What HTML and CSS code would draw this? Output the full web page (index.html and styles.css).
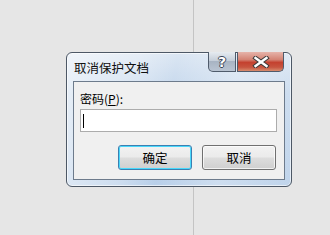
FILE: index.html
```html
<!DOCTYPE html>
<html lang="zh-CN">
<head>
<meta charset="utf-8">
<link rel="stylesheet" href="styles.css">
</head>
<body>
<div class="dialog">
  <div class="titlebar">
    <span class="title">取消保护文档</span>
    <div class="caption-btns">
      <div class="cbtn help"><span class="glyph">?</span></div>
      <div class="cbtn close">
        <svg width="18" height="12" viewBox="0 0 18 12">
          <path d="M3.5 2 L14.5 10 M14.5 2 L3.5 10" stroke="#3a3a3a" stroke-width="4.4" stroke-linecap="square" fill="none"/>
          <path d="M3.5 2 L14.5 10 M14.5 2 L3.5 10" stroke="#ffffff" stroke-width="2.4" stroke-linecap="square" fill="none"/>
        </svg>
      </div>
    </div>
  </div>
  <div class="client">
    <div class="label">密码(<u>P</u>):</div>
    <div class="input"><span class="caret"></span></div>
    <div class="actions">
      <div class="btn default">确定</div>
      <div class="btn">取消</div>
    </div>
  </div>
</div>
</body>
</html>
```
FILE: styles.css
```css
html, body {
  margin: 0;
  padding: 0;
}
body {
  width: 330px;
  height: 235px;
  box-sizing: border-box;
  padding: 52px 0 0 66px;
  background:
    linear-gradient(to right, transparent 193px, #c4c4c4 193px, #c4c4c4 194px, transparent 194px),
    #e6e6e6;
  font-family: "Noto Sans CJK SC", "Microsoft YaHei", sans-serif;
  font-size: 12px;
  color: #000;
  overflow: hidden;
}
.dialog {
  width: 226px;
  height: 135px;
  box-sizing: border-box;
  border: 1px solid #4d5866;
  border-radius: 6px;
  background:
    linear-gradient(100deg, rgba(255,255,255,0.6) 0%, rgba(255,255,255,0.3) 30%, rgba(255,255,255,0) 45%, rgba(255,255,255,0.3) 70%, rgba(255,255,255,0.1) 100%),
    linear-gradient(#dbe6f3 0px, #c4d7ec 40px, #b8cfe9 100%);
  box-shadow: inset 0 0 0 1px rgba(255,255,255,0.6);
  display: flex;
  flex-direction: column;
  padding: 0 6px 6px 6px;
}
.titlebar {
  height: 28px;
  display: flex;
  align-items: flex-start;
  justify-content: space-between;
  flex: none;
}
.title {
  margin-top: 7px;
  margin-left: 1px;
  line-height: 16px;
  font-size: 12.5px;
  color: #101010;
}
.caption-btns {
  display: flex;
  gap: 1px;
  margin-top: -1px;
  margin-right: 1px;
}
.cbtn {
  height: 20px;
  box-sizing: border-box;
  border: 1px solid #4f5b6b;
  border-top: none;
  display: flex;
  align-items: center;
  justify-content: center;
}
.help {
  width: 28px;
  border-radius: 0 0 0 5px;
  background: linear-gradient(#e6ebf0 0%, #c5ced9 45%, #a8b4c3 50%, #b9c4d2 100%);
}
.glyph {
  font-family: "DejaVu Sans", sans-serif;
  font-weight: bold;
  font-size: 14px;
  line-height: 14px;
  color: #fff;
  text-shadow: 1px 0 0 #3c4656, -1px 0 0 #3c4656, 0 1px 0 #3c4656, 0 -1px 0 #3c4656;
}
.close {
  width: 47px;
  border-radius: 0 0 5px 0;
  background: linear-gradient(#e6b4aa 0%, #d48374 40%, #c4412f 55%, #c7543f 80%, #d78c6e 100%);
}
.client {
  flex: 1;
  border: 1px solid #6d7b8c;
  background: #f0f0f0;
  padding: 8px 7px 9px 6px;
  display: flex;
  flex-direction: column;
}
.label {
  line-height: 17px;
  height: 17px;
  margin-left: 0;
}
.input {
  margin-top: 2px;
  height: 23px;
  box-sizing: border-box;
  border: 1px solid #acacac;
  background: #fff;
  display: flex;
  align-items: center;
  padding-left: 2px;
}
.caret {
  width: 1px;
  height: 14px;
  background: #000;
}
.actions {
  margin-top: auto;
  display: flex;
  justify-content: flex-end;
  gap: 10px;
  padding-right: 1px;
}
.btn {
  width: 74px;
  height: 25px;
  box-sizing: border-box;
  border: 1px solid #707070;
  border-radius: 3px;
  background: linear-gradient(#f2f2f2 0%, #ebebeb 48%, #dddddd 52%, #cfcfcf 100%);
  box-shadow: inset 0 0 0 1px rgba(255,255,255,0.7);
  display: flex;
  align-items: center;
  justify-content: center;
  line-height: 16px;
  font-size: 12.5px;
}
.btn.default {
  border-color: #3c7fb1;
  box-shadow: inset 0 0 0 1px #48d8fb;
}
```
